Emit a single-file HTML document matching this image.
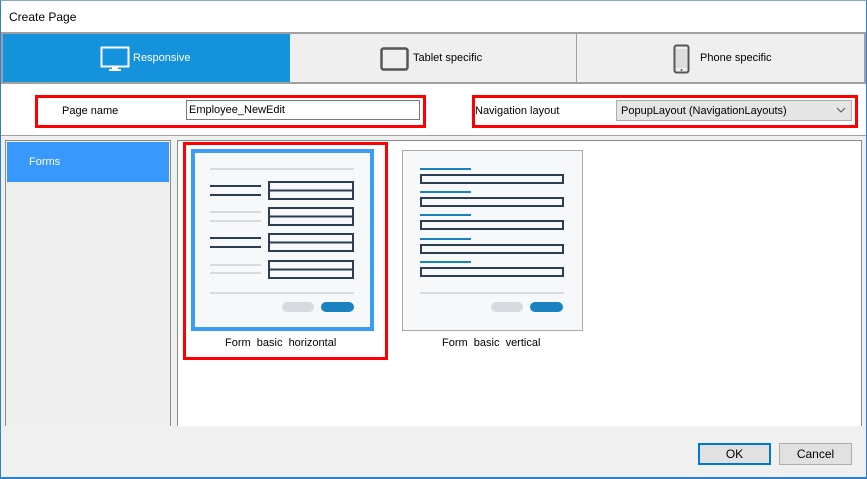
<!DOCTYPE html>
<html><head><style>
*{box-sizing:border-box;margin:0;padding:0}
body{width:867px;height:479px;position:relative;background:#fff;font-family:"Liberation Sans",sans-serif;font-size:11px;color:#000;overflow:hidden}
.a{position:absolute}
</style></head><body>
<div class="a" style="left:0;top:0;width:867px;height:479px;border:1px solid #2b7fd4;border-top-color:#8ab;"></div>
<div class="a" style="left:9px;top:10px;font-size:12px">Create Page</div>
<!-- tabs -->
<div class="a" style="left:1px;top:32px;width:865px;height:52px;background:#efefef;border:2px solid #a0a0a0"></div>
<div class="a" style="left:3px;top:34px;width:287px;height:48px;background:#1592dc"></div>
<div class="a" style="left:576px;top:34px;width:1px;height:48px;background:#a0a0a0"></div>
<svg class="a" style="left:100px;top:46px" width="32" height="26"><rect x="1.5" y="1.5" width="27" height="19" fill="none" stroke="#fff" stroke-width="2"/><rect x="12" y="21" width="6" height="2" fill="#fff"/><rect x="9" y="23" width="12" height="2" fill="#fff"/></svg>
<div class="a" style="left:133px;top:52px;color:#fff">Responsive</div>
<svg class="a" style="left:380px;top:47px" width="30" height="24"><rect x="1.5" y="1.5" width="26" height="21" rx="2" fill="none" stroke="#555" stroke-width="2.5"/></svg>
<div class="a" style="left:413px;top:52px">Tablet specific</div>
<svg class="a" style="left:673px;top:44px" width="18" height="30"><rect x="1.5" y="1.5" width="14" height="27" rx="2" fill="none" stroke="#555" stroke-width="2"/><rect x="3" y="5" width="11" height="19" fill="#ddd"/><circle cx="8.5" cy="26" r="1" fill="#555"/></svg>
<div class="a" style="left:700px;top:52px">Phone specific</div>
<!-- form row -->
<div class="a" style="left:35px;top:95px;width:391px;height:33px;border:3px solid #f00"></div>
<div class="a" style="left:62px;top:105px">Page name</div>
<div class="a" style="left:186px;top:100px;width:234px;height:20px;border:1px solid #7a7a7a;background:#fff;padding:3px 2px">Employee_NewEdit</div>
<div class="a" style="left:472px;top:95px;width:386px;height:33px;border:3px solid #f00"></div>
<div class="a" style="left:475px;top:105px">Navigation layout</div>
<div class="a" style="left:616px;top:100px;width:236px;height:21px;border:1px solid #adadad;background:#e5e5e5;padding:4px 4px">PopupLayout (NavigationLayouts)</div>
<svg class="a" style="left:836px;top:106px" width="10" height="8"><path d="M1 2 L5 6 L9 2" fill="none" stroke="#555"/></svg>
<!-- body -->
<div class="a" style="left:1px;top:135px;width:865px;height:342px;background:#f0f0f0;border-top:1px solid #a0a0a0"></div>
<div class="a" style="left:5px;top:140px;width:166px;height:290px;border:1px solid #8a8a8a;background:#efefef"></div>
<div class="a" style="left:7px;top:142px;width:162px;height:40px;background:#3898fc"></div>
<div class="a" style="left:29px;top:156px;color:#fff">Forms</div>
<div class="a" style="left:177px;top:140px;width:685px;height:290px;border:1px solid #8a8a8a;background:#fff"></div>
<div class="a" style="left:183px;top:142px;width:205px;height:218px;border:3px solid #f00"></div>
<svg class="a" style="left:190px;top:148px" width="400" height="186">
<g transform="translate(-190,-148)">
<rect x="193" y="151" width="179" height="178" fill="#f7f8fa" stroke="#3a9cf4" stroke-width="4"/>
<rect x="210" y="168" width="144" height="2" fill="#d6dbe0"/>
<g fill="none" stroke="#2c3e50" stroke-width="2">
<rect x="269" y="182" width="84" height="17"/><line x1="269" y1="190.5" x2="353" y2="190.5"/>
<rect x="269" y="208" width="84" height="17"/><line x1="269" y1="216.5" x2="353" y2="216.5"/>
<rect x="269" y="234" width="84" height="17"/><line x1="269" y1="242.5" x2="353" y2="242.5"/>
<rect x="269" y="261" width="84" height="17"/><line x1="269" y1="269.5" x2="353" y2="269.5"/>
</g>
<rect x="210" y="185" width="51" height="2" fill="#2c3e50"/><rect x="210" y="194" width="51" height="2" fill="#2c3e50"/>
<rect x="210" y="211" width="51" height="2" fill="#d6dbe0"/><rect x="210" y="220" width="51" height="2" fill="#d6dbe0"/>
<rect x="210" y="237" width="51" height="2" fill="#2c3e50"/><rect x="210" y="246" width="51" height="2" fill="#2c3e50"/>
<rect x="210" y="264" width="51" height="2" fill="#d6dbe0"/><rect x="210" y="272" width="51" height="2" fill="#d6dbe0"/>
<rect x="210" y="292" width="144" height="2" fill="#d6dbe0"/>
<rect x="282" y="302" width="32" height="10" rx="5" fill="#d6dbe0"/>
<rect x="321" y="302" width="33" height="10" rx="5" fill="#1a82c0"/>
<rect x="402.5" y="150.5" width="180" height="180" fill="#f7f8fa" stroke="#aaa"/>
<g fill="#1a82c0"><rect x="420" y="168" width="51" height="2"/><rect x="420" y="191" width="51" height="2"/><rect x="420" y="214" width="51" height="2"/><rect x="420" y="238" width="51" height="2"/><rect x="420" y="261" width="51" height="2"/></g>
<g fill="none" stroke="#2c3e50" stroke-width="2"><rect x="421" y="175" width="142" height="8"/><rect x="421" y="198" width="142" height="8"/><rect x="421" y="221" width="142" height="8"/><rect x="421" y="245" width="142" height="8"/><rect x="421" y="268" width="142" height="8"/></g>
<rect x="420" y="292" width="144" height="2" fill="#d6dbe0"/>
<rect x="491" y="302" width="32" height="10" rx="5" fill="#d6dbe0"/>
<rect x="530" y="302" width="33" height="10" rx="5" fill="#1a82c0"/>
</g></svg>
<div class="a" style="left:225px;top:337px">Form &nbsp;basic &nbsp;horizontal</div>
<div class="a" style="left:442px;top:337px">Form &nbsp;basic &nbsp;vertical</div>
<!-- bottom -->
<div class="a" style="left:1px;top:426px;width:865px;height:51px;background:#f0f0f0"></div>
<div class="a" style="left:698px;top:443px;width:73px;height:22px;border:2px solid #0078d7;background:#e1e1e1;text-align:center;line-height:18px;font-size:12px">OK</div>
<div class="a" style="left:779px;top:443px;width:73px;height:22px;border:1px solid #adadad;background:#e1e1e1;text-align:center;line-height:20px;font-size:12px">Cancel</div>
<div class="a" style="left:0;top:477px;width:867px;height:2px;background:#2b7fd4"></div>
</body></html>
